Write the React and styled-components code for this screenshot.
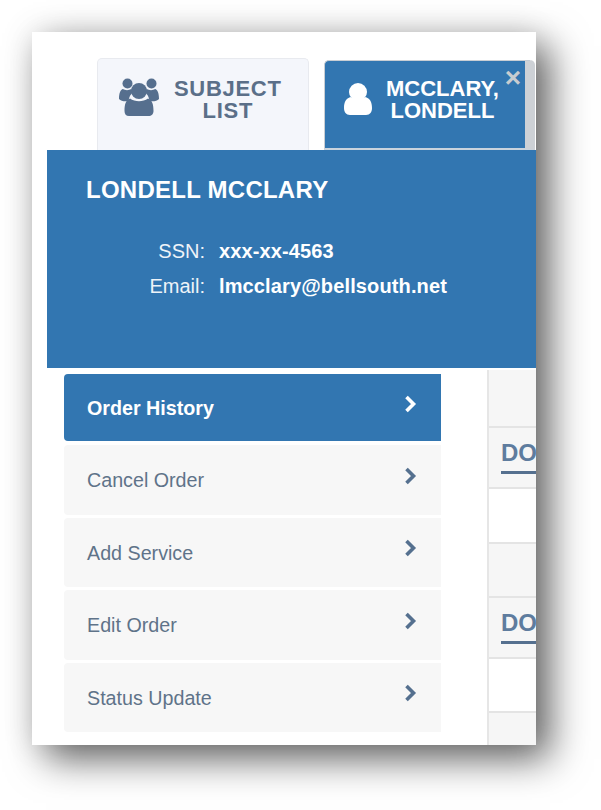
import React from "react";
import styled, { createGlobalStyle } from "styled-components";

const Global = createGlobalStyle`
  html, body { margin: 0; padding: 0; background: #fff; overflow: hidden; height: 810px; }
  * { box-sizing: border-box; }
  body { font-family: "Liberation Sans", Arial, sans-serif; }
`;

const Page = styled.div`
  width: 601px;
  height: 810px;
  padding: 32px 0 0 32px;
  overflow: hidden;
`;
const Card = styled.main`
  width: 504px;
  height: 713px;
  background: #fff;
  overflow: hidden;
  box-shadow: 14px 14px 36px rgba(0, 0, 0, 0.6), 0 0 30px rgba(0, 0, 0, 0.1);
`;
const Tabs = styled.nav`
  display: flex;
  gap: 15px;
  height: 118px;
  padding: 26px 0 0 65px;
`;
const Tab = styled.div`
  position: relative;
  width: ${(p) => (p.$active ? "211px" : "212px")};
  height: ${(p) => (p.$active ? "90px" : "92px")};
  margin-top: ${(p) => (p.$active ? "2px" : "0")};
  display: flex;
  align-items: flex-start;
  padding: ${(p) => (p.$active ? "17px 0 0 19px" : "19px 0 0 20px")};
  gap: ${(p) => (p.$active ? "14px" : "14px")};
  border-radius: 5px 5px 0 0;
  background: ${(p) => (p.$active ? "#3276b1" : "#f4f6fb")};
  border: 1px solid ${(p) => (p.$active ? "#c9ced4" : "#e8eaef")};
  border-bottom: ${(p) => (p.$active ? "2px solid #c9d3dd" : "none")};
  border-right: ${(p) => (p.$active ? "10px solid #cdd1d6" : "1px solid #e8eaef")};
  color: ${(p) => (p.$active ? "#fff" : "#5b6f88")};
`;
const TabLabel = styled.div`
  font-size: 22px;
  font-weight: 700;
  line-height: 21.5px;
  text-align: center;
  letter-spacing: ${(p) => (p.$active ? "0" : "0.7px")};
`;
const Close = styled.span`
  position: absolute;
  top: 7px;
  right: 4px;
  color: #c8ccd0;
  font-size: 28px;
  font-weight: 700;
  line-height: 20px;
`;
const Header = styled.header`
  margin-left: 15px;
  height: 218px;
  background: #3276b1;
  color: #fff;
  padding: 26px 0 0 39px;
`;
const Name = styled.h1`
  margin: 0 0 37px;
  font-size: 24px;
  line-height: 27px;
  font-weight: 700;
  letter-spacing: 0.25px;
`;
const Info = styled.dl`
  margin: 0;
  display: grid;
  grid-template-columns: 119px auto;
  column-gap: 14px;
  row-gap: 12px;
  font-size: 20px;
  line-height: 23px;
`;
const Key = styled.dt`
  text-align: right;
  color: #eef3f8;
`;
const Val = styled.dd`
  margin: 0;
  font-weight: 700;
  letter-spacing: 0.13px;
`;
const Body = styled.div`
  display: flex;
  padding-left: 32px;
  gap: 47px;
`;
const Menu = styled.ul`
  list-style: none;
  margin: 6px 0 0;
  padding: 0;
  width: 377px;
  flex: none;
`;
const Item = styled.li`
  height: ${(p) => (p.$active ? "67px" : "69.5px")};
  margin-bottom: ${(p) => (p.$active ? "4px" : "3px")};
  display: flex;
  align-items: center;
  justify-content: space-between;
  padding: 2px 24px 0 23px;
  border-radius: 4px 0 0 4px;
  font-size: 19.7px;
  font-weight: ${(p) => (p.$active ? 700 : 400)};
  background: ${(p) => (p.$active ? "#3276b1" : "#f7f7f7")};
  color: ${(p) => (p.$active ? "#fff" : "#5f7389")};
`;
const Chevron = styled.svg`
  width: 13px;
  height: 18px;
  margin-top: -10px;
  color: ${(p) => (p.$active ? "#fff" : "#55708f")};
`;
const Panel = styled.section`
  margin: 2px 0 0 -1px;
  flex: 1;
  min-width: 0;
  border-left: 2px solid #e6e6e6;
  display: flex;
  flex-direction: column;
`;
const Band = styled.div`
  height: ${(p) => p.$h}px;
  background: ${(p) => (p.$white ? "#fff" : "#f6f6f6")};
  border-bottom: 2px solid #e4e4e4;
  flex: none;
`;
const DocBand = styled(Band)`
  padding: 10px 0 0 12px;
`;
const DocTitle = styled.h2`
  margin: 0;
  height: 36px;
  font-size: 24px;
  line-height: 30px;
  font-weight: 700;
  color: #5e7c9e;
  border-bottom: 3px solid #55708f;
`;

const UsersIcon = () => (
  <svg width="42" height="40" viewBox="0 0 42 40" style={{ flex: "none", marginTop: -1 }}>
    <g fill="#566f8e">
      <circle cx="9.5" cy="6.5" r="5" />
      <circle cx="33.5" cy="6.5" r="5" />
      <path d="M1 22c0-6 1.500-9.500 4-10 2 1.500 6 1.500 8 0 1 .5 2 1.500 2.500 3-3 2-4.500 5-5 9-3 .5-7.500.5-9.500-2z" />
      <path d="M41 22c0-6-1.500-9.500-4-10-2 1.500-6 1.500-8 0-1 .5-2 1.500-2.500 3 3 2 4.500 5 5 9 3 .5 7.500.5 9.500-2z" />
      <circle cx="21" cy="14" r="8" />
      <path d="M6.500 34c0-7 1.500-11 5.500-12.500 5 3.500 13 3.500 18 0 4 1.500 5.500 5.500 5.500 12.500 0 3-2 5-5 5h-19.500c-3 0-4.500-2-4.500-5z" />
    </g>
  </svg>
);

const UserIcon = () => (
  <svg width="28" height="33" viewBox="0 0 28 33" style={{ flex: "none", marginTop: 4 }}>
    <g fill="#fff">
      <circle cx="14" cy="10" r="9" />
      <path d="M0 26c0-6 2-9.500 6.500-11 4.500 3.500 10.500 3.500 15 0 4.500 1.500 6.500 5 6.500 11 0 4-2 7-6 7h-16c-4 0-6-3-6-7z" />
    </g>
  </svg>
);

const Arrow = ({ active }) => (
  <Chevron $active={active} viewBox="0 0 13 18">
    <path d="M2.500 2l7 7-7 7" fill="none" stroke="currentColor" strokeWidth="3.600" />
  </Chevron>
);

const items = ["Order History", "Cancel Order", "Add Service", "Edit Order", "Status Update"];

export default function App() {
  return (
    <Page>
      <Global />
      <Card>
        <Tabs>
          <Tab>
            <UsersIcon />
            <TabLabel>SUBJECT<br />LIST</TabLabel>
          </Tab>
          <Tab $active>
            <UserIcon />
            <TabLabel $active>MCCLARY,<br />LONDELL</TabLabel>
            <Close>×</Close>
          </Tab>
        </Tabs>
        <Header>
          <Name>LONDELL MCCLARY</Name>
          <Info>
            <Key>SSN:</Key>
            <Val>xxx-xx-4563</Val>
            <Key>Email:</Key>
            <Val>lmcclary@bellsouth.net</Val>
          </Info>
        </Header>
        <Body>
          <Menu>
            {items.map((label, i) => (
              <Item key={label} $active={i === 0}>
                {label}
                <Arrow active={i === 0} />
              </Item>
            ))}
          </Menu>
          <Panel>
            <Band $h={58} />
            <DocBand $h={61}><DocTitle>DO</DocTitle></DocBand>
            <Band $white $h={55} />
            <Band $h={54} />
            <DocBand $h={61}><DocTitle>DO</DocTitle></DocBand>
            <Band $white $h={54} />
            <Band $h={40} />
          </Panel>
        </Body>
      </Card>
    </Page>
  );
}
